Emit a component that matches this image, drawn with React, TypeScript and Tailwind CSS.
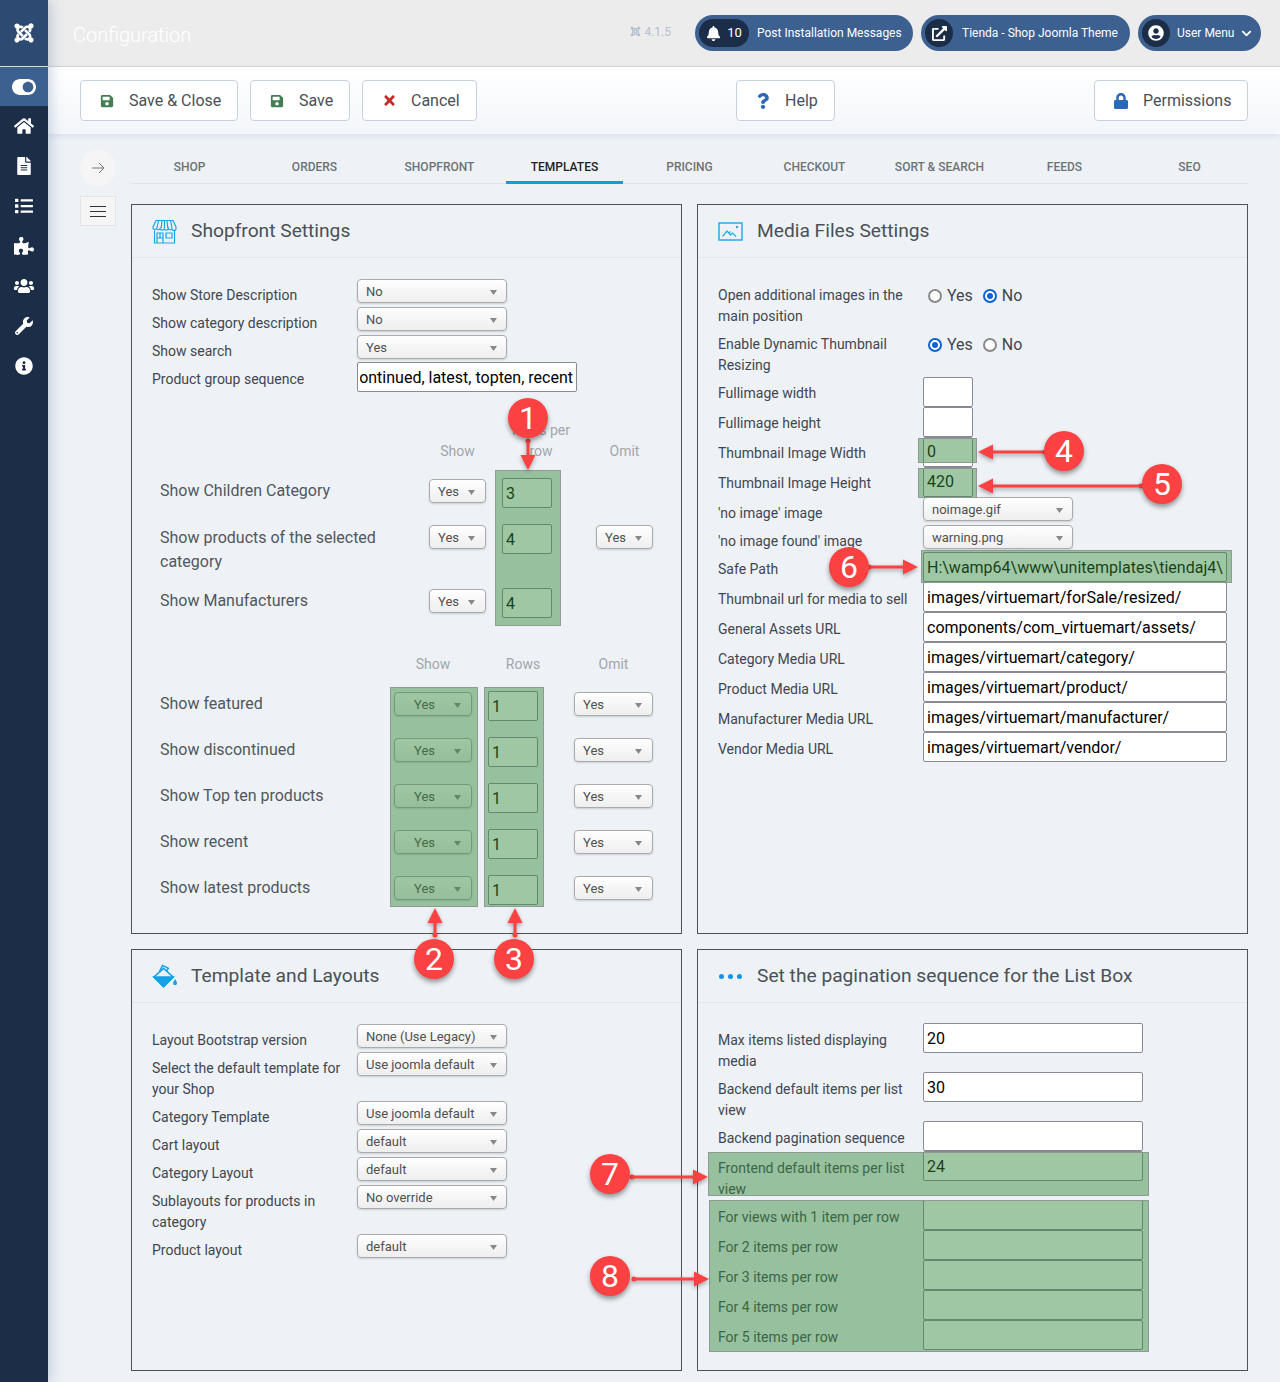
import { ReactNode } from 'react'
import {
  FaBell, FaChevronDown, FaExternalLinkAlt, FaFileAlt, FaHome, FaInfoCircle, FaJoomla,
  FaList, FaLock, FaPuzzlePiece, FaQuestion, FaSave, FaTimes, FaToggleOn, FaUserCircle, FaUsers, FaWrench,
} from 'react-icons/fa'

const tabs = ['SHOP', 'ORDERS', 'SHOPFRONT', 'TEMPLATES', 'PRICING', 'CHECKOUT', 'SORT & SEARCH', 'FEEDS', 'SEO']
const sideIcons = [FaHome, FaFileAlt, FaList, FaPuzzlePiece, FaUsers, FaWrench, FaInfoCircle]

function ToolButton({ icon, label, className }: { icon: ReactNode; label: string; className: string }) {
  return (
    <button className={`h-[41px] flex items-center bg-white border border-[#c8d0e0] rounded text-base text-[#495057] ${className}`}>
      {icon}
      {label}
    </button>
  )
}

function Select({ value, className = 'w-[150px] pl-2 pr-[9px]' }: { value: string; className?: string }) {
  return (
    <div className={`h-[24px] shrink-0 pt-[2px] flex items-center justify-between rounded border border-[#aaa] bg-linear-to-b from-white via-[#f6f6f6] to-[#eee] shadow-[0_1px_2px_rgba(0,0,0,0.15)] text-[13px] text-[#505050] ${className}`}>
      <span>{value}</span>
      <svg width="7" height="5" viewBox="0 0 7 5"><path d="M0 0h7L3.500 5z" fill="#888" /></svg>
    </div>
  )
}

function Input({ value = '', className = 'w-[220px]', pt = 'pt-[2px]' }: { value?: string; className?: string; pt?: string }) {
  return (
    <div className={`h-[30px] shrink-0 flex items-center overflow-hidden whitespace-nowrap bg-white border border-[#8a8a96] rounded-[2px] pl-[3px] text-base text-black ${pt} ${className}`}>
      {value}
    </div>
  )
}

function Row({ label, children, h = 'min-h-[28px]', pt = 'pt-[6px]' }: { label: string; children: ReactNode; h?: string; pt?: string }) {
  return (
    <div className={`flex items-start ${h}`}>
      <div className={`w-[205px] shrink-0 pr-[10px] text-sm leading-[21px] text-[#3f4650] ${pt}`}>{label}</div>
      {children}
    </div>
  )
}

function Radio({ on, label }: { on: boolean; label: string }) {
  return (
    <div className="flex items-center gap-[5px] text-base leading-[21px] text-[#3f4650]">
      <span className={`w-[14px] h-[14px] rounded-full flex items-center justify-center bg-white border-2 ${on ? 'border-[#0b62d6]' : 'border-[#8a8a8a]'}`}>
        {on && <span className="w-[6px] h-[6px] rounded-full bg-[#0b62d6]" />}
      </span>
      {label}
    </div>
  )
}

function Radios({ value }: { value: 'Yes' | 'No' }) {
  return (
    <div className="flex gap-[10px] pl-[5px] pt-[6px]">
      <Radio on={value === 'Yes'} label="Yes" />
      <Radio on={value === 'No'} label="No" />
    </div>
  )
}

function Panel({ icon, title, className, body = 'pt-[21px]', children }: { icon: ReactNode; title: string; className: string; body?: string; children: ReactNode }) {
  return (
    <section className={`border border-[#4e5358] ${className}`}>
      <div className="h-[53px] flex items-center gap-[14px] pl-[20px] border-b border-[#e3e6ea]">
        <span className="w-[25px] flex justify-center">{icon}</span>
        <h2 className="text-[19.2px] text-[#495057]">{title}</h2>
      </div>
      <div className={`px-[20px] ${body}`}>{children}</div>
    </section>
  )
}

function Highlight({ className }: { className: string }) {
  return <div className={`absolute bg-[rgba(53,136,60,0.47)] border border-[#8f9a94] ${className}`} />
}

function StoreIcon() {
  return (
    <svg width="25" height="25" viewBox="0 0 25 25" fill="none" stroke="#1aa5ea" strokeWidth="1.2">
      <path d="M4 1.500h17l3 6.500v1.500a2 2 0 0 1-4 0 2 2 0 0 1-3.700 0 2.100 2.100 0 0 1-4.100 0 2.100 2.100 0 0 1-4.100 0 2 2 0 0 1-3.700 0 2 2 0 0 1-3.400 0V8z" />
      <path d="M6.500 1.500 5 9M10 1.500 9.200 9M12.500 1.500V9M15 1.500l.8 7.500M18.500 1.500 20 9" />
      <path d="M2.500 11.500V24h20V11.500" />
      <path d="M5 24V14h6v10M5 19h6M8 14v5M14 14h6v5h-6z" />
    </svg>
  )
}

function MediaIcon() {
  return (
    <svg width="25" height="19" viewBox="0 0 25 19" fill="none" stroke="#2aa9e6">
      <rect x="1" y="1" width="23" height="17" strokeWidth="1.500" />
      <path d="M4.500 14.500 9 9l3.500 4 2-2 3.500 3.500M11 11l1.500-1.500" strokeWidth="1.200" />
      <circle cx="19" cy="5" r="1.200" fill="#2aa9e6" stroke="none" />
    </svg>
  )
}

function BucketIcon() {
  return (
    <svg width="26" height="24" viewBox="0 0 26 24" fill="none" stroke="#14a0e6" strokeWidth="1.600">
      <path d="M12 4 2 13l10 10 10-10z" />
      <path d="M2 13h20L12 23z" fill="#14a0e6" />
      <path d="M8 7l3-6 6 3-2 3" />
      <path d="M24 15c-1 2-2 3-2 4.500a2 2 0 0 0 4 0c0-1.500-1-2.500-2-4.500z" fill="#14a0e6" stroke="none" />
    </svg>
  )
}

function Dots() {
  return (
    <span className="flex gap-[4px]">
      <span className="w-[5px] h-[5px] rounded-full bg-[#1592e6]" />
      <span className="w-[5px] h-[5px] rounded-full bg-[#1592e6]" />
      <span className="w-[5px] h-[5px] rounded-full bg-[#1592e6]" />
    </span>
  )
}

// numbered callouts over the page
const badges = [
  ['1', 'left-[508px] top-[398px]'],
  ['2', 'left-[414px] top-[939px]'],
  ['3', 'left-[494px] top-[939px]'],
  ['4', 'left-[1044px] top-[431px]'],
  ['5', 'left-[1142px] top-[464px]'],
  ['6', 'left-[829px] top-[547px]'],
  ['7', 'left-[590px] top-[1154px]'],
  ['8', 'left-[590px] top-[1256px]'],
]

// tail x, tail y, tip x, tip y
const arrows = [
  [528, 441, 528, 470],
  [435, 935, 435, 908],
  [515, 935, 515, 908],
  [1045, 452, 978, 452],
  [1141, 486, 978, 486],
  [869, 567, 918, 567],
  [632, 1177, 708, 1177],
  [634, 1279, 709, 1279],
]

function Annotations() {
  return (
    <>
      <svg className="absolute left-0 top-0 drop-shadow-[0_2px_2px_rgba(0,0,0,0.35)]" width="1280" height="1382" fill="#fb4141">
        {arrows.map(([x1, y1, x2, y2]) => {
          const len = Math.hypot(x2 - x1, y2 - y1)
          const deg = (Math.atan2(y2 - y1, x2 - x1) * 180) / Math.PI
          return (
            <g key={`${x1}-${y1}`} transform={`translate(${x1} ${y1}) rotate(${deg})`}>
              <circle r="2.500" />
              <rect y="-1.500" width={len - 14} height="3" />
              <path d={`M${len} 0l-15-7.500v15z`} />
            </g>
          )
        })}
      </svg>
      {badges.map(([n, pos]) => (
        <div key={n} className={`absolute w-[40px] h-[40px] rounded-full bg-[#fb4141] shadow-[0_3px_5px_rgba(0,0,0,0.4)] flex items-center justify-center text-[32px] text-white ${pos}`}>
          {n}
        </div>
      ))}
    </>
  )
}

export default function App() {
  return (
    <div className="relative w-[1280px] h-[1382px] overflow-hidden flex bg-[#eef2f6] font-['Roboto',sans-serif]">
      <aside className="w-12 shrink-0 bg-[#1c2d48] text-white flex flex-col items-center shadow-[3px_0_12px_rgba(60,96,144,0.25)] z-10">
        <div className="w-full h-[66px] bg-[#2c4a72] flex items-center justify-center">
          <FaJoomla className="w-[22px] h-[22px]" />
        </div>
        <div className="w-full h-[40px] bg-[#3c6090] border-t border-[#d8dde3] flex items-center justify-center">
          <FaToggleOn className="w-[24px] h-[24px]" />
        </div>
        {sideIcons.map((Icon, i) => (
          <div key={i} className="w-full h-[40px] shrink-0 flex items-center justify-center">
            <Icon className="w-[20px] h-[18px]" />
          </div>
        ))}
      </aside>

      <div className="flex-1 min-w-0 flex flex-col">
        <header className="h-[67px] shrink-0 bg-[#ececec] border-b border-[#d6d6d6] flex items-center pl-[25px] pr-[19px]">
          <h1 className="text-xl font-light text-white mt-[3px]">Configuration</h1>
          <div className="ml-auto flex items-center gap-[3px] text-xs text-[#b4bfcd] mr-[24px] -mt-[3px]">
            <FaJoomla className="w-[11px] h-[11px]" />
            4.1.5
          </div>
          <div className="flex gap-2 text-xs text-white">
            <div className="h-[36px] w-[218px] rounded-full bg-[#3c6090] flex items-center pl-[4px]">
              <span className="w-[50px] h-[28px] rounded-full bg-[#1c2d48] flex items-center justify-center gap-[6px] text-[13px]">
                <FaBell className="w-[15px] h-[15px]" />10
              </span>
              <span className="ml-[8px]">Post Installation Messages</span>
            </div>
            <div className="h-[36px] w-[209px] rounded-full bg-[#3c6090] flex items-center pl-[4px]">
              <span className="w-[28px] h-[28px] rounded-full bg-[#1c2d48] flex items-center justify-center">
                <FaExternalLinkAlt className="w-[15px] h-[15px]" />
              </span>
              <span className="ml-[9px]">Tienda - Shop Joomla Theme</span>
            </div>
            <div className="h-[36px] w-[123px] rounded-full bg-[#3c6090] flex items-center pl-[4px]">
              <span className="w-[28px] h-[28px] rounded-full bg-[#1c2d48] flex items-center justify-center">
                <FaUserCircle className="w-[16px] h-[16px]" />
              </span>
              <span className="ml-[7px]">User Menu</span>
              <FaChevronDown className="w-[11px] h-[11px] ml-[7px]" />
            </div>
          </div>
        </header>

        <div className="h-[67px] shrink-0 flex items-center px-[32px] bg-linear-to-b from-white to-[#f3f6fa] shadow-[0_2px_6px_rgba(120,150,190,0.18)]">
          <ToolButton className="w-[158px] pl-[19px] gap-[15px]" icon={<FaSave className="w-[14px] h-[14px] text-[#457d54]" />} label="Save & Close" />
          <ToolButton className="w-[100px] ml-[12px] pl-[19px] gap-[15px]" icon={<FaSave className="w-[14px] h-[14px] text-[#457d54]" />} label="Save" />
          <ToolButton className="w-[115px] ml-[12px] pl-[19px] gap-[14px]" icon={<FaTimes className="w-[15px] h-[15px] text-[#c52827]" />} label="Cancel" />
          <ToolButton className="w-[99px] ml-[259px] pl-[19px] gap-[15px]" icon={<FaQuestion className="w-[14px] h-[16px] text-[#2a69b8]" />} label="Help" />
          <ToolButton className="w-[154px] ml-auto pl-[19px] gap-[15px]" icon={<FaLock className="w-[14px] h-[16px] text-[#2a69b8]" />} label="Permissions" />
        </div>

        <main className="flex pt-[16px] pl-[32px] pr-[32px]">
          <div className="w-[36px] shrink-0 mr-[15px]">
            <div className="w-[36px] h-[36px] rounded-full bg-[#f5f5f5] flex items-center justify-center">
              <svg width="14" height="12" viewBox="0 0 14 12" fill="none" stroke="#777"><path d="M1 6h12M8 1l5 5-5 5" /></svg>
            </div>
            <div className="mt-[10px] h-[30px] bg-[#f5f5f5] border border-[#e4e4e4] flex flex-col items-center justify-center gap-[4px]">
              <span className="w-[16px] h-px bg-[#333]" />
              <span className="w-[16px] h-px bg-[#333]" />
              <span className="w-[16px] h-px bg-[#333]" />
            </div>
          </div>

          <div className="w-[1117px]">
            <nav className="h-[34px] flex gap-2 border-b border-[#e0e4e8]">
              {tabs.map(t => (
                <div key={t} className={`w-[117px] shrink-0 flex items-center justify-center text-xs font-medium ${t === 'TEMPLATES' ? 'h-[34px] border-b-[3px] border-[#0d9ed9] pt-[3px] text-[#222]' : 'h-[33px] text-[#6d7276]'}`}>
                  {t}
                </div>
              ))}
            </nav>

            <div className="mt-[20px] grid grid-cols-[551px_551px] gap-[15px]">
              <Panel className="h-[730px]" icon={<StoreIcon />} title="Shopfront Settings">
                <Row label="Show Store Description"><Select value="No" /></Row>
                <Row label="Show category description"><Select value="No" /></Row>
                <Row label="Show search"><Select value="Yes" /></Row>
                <Row label="Product group sequence">
                  <div className="w-[220px] h-[30px] -mt-[1px] pt-[2px] flex items-center bg-white border border-[#8a8a96] rounded-[2px] pl-[2px] pr-[3px] text-base text-black">
                    <div className="w-full flex justify-end overflow-hidden whitespace-nowrap">ontinued, latest, topten, recent</div>
                  </div>
                </Row>

                <div className="mt-[12px] ml-[8px] grid grid-cols-[269px_73px_94px_57px] text-sm leading-[21px] text-[#a1a6ab]">
                  <div className="h-[58px] col-start-2 flex items-end justify-center pr-[16px]">Show</div>
                  <div className="h-[58px] flex items-end justify-center text-center pr-[16px]">Rows per<br />row</div>
                  <div className="h-[58px] flex items-end justify-center">Omit</div>
                </div>
                <div className="ml-[8px] mt-[17px] grid grid-cols-[269px_73px_94px_57px] auto-rows-min text-base leading-[24px] text-[#50575e]">
                  <div className="h-[46px]">Show Children Category</div>
                  <Select value="Yes" className="w-[57px] pl-2 pr-[10px]" />
                  <Input value="3" className="w-[50px] -mt-[1px]" />
                  <div />
                  <div className="h-[64px] w-[240px] pt-[1px]">Show products of the selected category</div>
                  <Select value="Yes" className="w-[57px] pl-2 pr-[10px]" />
                  <Input value="4" className="w-[50px] -mt-[1px]" />
                  <Select value="Yes" className="w-[57px] pl-2 pr-[10px]" />
                  <div className="h-[40px]">Show Manufacturers</div>
                  <Select value="Yes" className="w-[57px] pl-2 pr-[10px]" />
                  <Input value="4" className="w-[50px] -mt-[1px]" />
                </div>

                <div className="mt-[25px] ml-[8px] grid grid-cols-[234px_94px_86px_79px] text-sm text-[#a1a6ab]">
                  <div className="col-start-2 text-center pr-[16px]">Show</div>
                  <div className="text-center pr-[16px]">Rows</div>
                  <div className="text-center">Omit</div>
                </div>
                <div className="ml-[8px] mt-[18px] grid grid-cols-[234px_94px_86px_79px] auto-rows-[46px] text-base leading-[24px] text-[#50575e]">
                  {['Show featured', 'Show discontinued', 'Show Top ten products', 'Show recent', 'Show latest products'].map(l => (
                    <div key={l} className="contents">
                      <div>{l}</div>
                      <Select value="Yes" className="w-[78px] pl-[19px] pr-[10px]" />
                      <Input value="1" className="w-[50px] -mt-[1px]" />
                      <Select value="Yes" className="w-[79px] pl-2 pr-[10px]" />
                    </div>
                  ))}
                </div>
              </Panel>

              <Panel className="h-[730px]" icon={<MediaIcon />} title="Media Files Settings">
                <Row label="Open additional images in the main position" h="h-[49px]"><Radios value="No" /></Row>
                <Row label="Enable Dynamic Thumbnail Resizing" h="h-[49px]"><Radios value="Yes" /></Row>
                <Row label="Fullimage width" h="h-[30px]"><Input className="w-[50px]" /></Row>
                <Row label="Fullimage height" h="h-[30px]"><Input className="w-[50px]" /></Row>
                <Row label="Thumbnail Image Width" h="h-[30px]"><Input className="w-[50px]" value="0" pt="pt-0" /></Row>
                <Row label="Thumbnail Image Height" h="h-[30px]"><Input className="w-[50px]" value="420" pt="pt-0" /></Row>
                <Row label="'no image' image"><Select value="noimage.gif" /></Row>
                <Row label="'no image found' image" h="h-[27px]"><Select value="warning.png" /></Row>
                {[
                  ['Safe Path', 'H:\\wamp64\\www\\unitemplates\\tiendaj4\\'],
                  ['Thumbnail url for media to sell', 'images/virtuemart/forSale/resized/'],
                  ['General Assets URL', 'components/com_virtuemart/assets/'],
                  ['Category Media URL', 'images/virtuemart/category/'],
                  ['Product Media URL', 'images/virtuemart/product/'],
                  ['Manufacturer Media URL', 'images/virtuemart/manufacturer/'],
                  ['Vendor Media URL', 'images/virtuemart/vendor/'],
                ].map(([l, v]) => (
                  <Row key={l} label={l} h="h-[30px]" pt="pt-[7px]"><Input className="w-[304px]" value={v} /></Row>
                ))}
              </Panel>

              <Panel className="h-[422px]" icon={<BucketIcon />} title="Template and Layouts">
                <Row label="Layout Bootstrap version"><Select value="None (Use Legacy)" /></Row>
                <Row label="Select the default template for your Shop" h="min-h-[49px]"><Select value="Use joomla default" /></Row>
                <Row label="Category Template"><Select value="Use joomla default" /></Row>
                <Row label="Cart layout"><Select value="default" /></Row>
                <Row label="Category Layout"><Select value="default" /></Row>
                <Row label="Sublayouts for products in category" h="min-h-[49px]"><Select value="No override" /></Row>
                <Row label="Product layout"><Select value="default" /></Row>
              </Panel>

              <Panel className="h-[422px]" icon={<Dots />} title="Set the pagination sequence for the List Box" body="pt-[20px]">
                <Row label="Max items listed displaying media" h="h-[49px]" pt="pt-[7px]"><Input value="20" /></Row>
                <Row label="Backend default items per list view" h="h-[49px]" pt="pt-[7px]"><Input value="30" /></Row>
                <Row label="Backend pagination sequence" h="h-[30px]" pt="pt-[7px]"><Input /></Row>
                <Row label="Frontend default items per list view" h="h-[49px]" pt="pt-[7px]"><Input value="24" /></Row>
                {['For views with 1 item per row', 'For 2 items per row', 'For 3 items per row', 'For 4 items per row', 'For 5 items per row'].map(l => (
                  <Row key={l} label={l} h="h-[30px]" pt="pt-[7px]"><Input /></Row>
                ))}
              </Panel>
            </div>
          </div>
        </main>
      </div>

      <Highlight className="left-[495px] top-[470px] w-[66px] h-[156px]" />
      <Highlight className="left-[390px] top-[687px] w-[88px] h-[220px]" />
      <Highlight className="left-[484px] top-[687px] w-[60px] h-[220px]" />
      <Highlight className="left-[918px] top-[438px] w-[59px] h-[25px]" />
      <Highlight className="left-[918px] top-[468px] w-[59px] h-[30px]" />
      <Highlight className="left-[921px] top-[550px] w-[311px] h-[33px]" />
      <Highlight className="left-[708px] top-[1152px] w-[441px] h-[44px]" />
      <Highlight className="left-[709px] top-[1200px] w-[440px] h-[152px]" />
      <Annotations />
    </div>
  )
}
